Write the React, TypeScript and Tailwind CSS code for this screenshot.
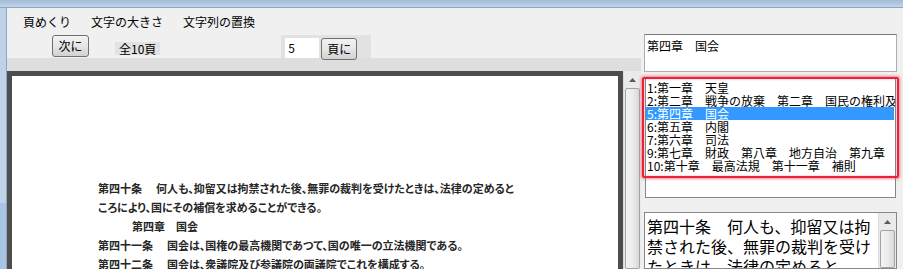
import React from "react";

function VScroll({ className }: { className: string }) {
  return (
    <div className={"flex flex-col bg-[#eaeaea] border-l border-[#dcdcdc] " + className}>
      <div className="h-[17px] shrink-0 flex items-center justify-center">
        <svg width="7" height="4" viewBox="0 0 7 4">
          <path d="M0 4 L3.5 0 L7 4 Z" fill="#5a5a5a" />
        </svg>
      </div>
      <div className="flex-1 mx-[1px] rounded-[2px] border border-[#a3a3a3] bg-gradient-to-r from-[#f4f4f4] via-[#ececec] to-[#d9d9d9]" />
    </div>
  );
}

function WinButton({ label, className }: { label: string; className: string }) {
  return (
    <div
      className={
        "flex items-center justify-center rounded-[3px] border border-[#707070] bg-gradient-to-b from-[#f3f3f3] via-[#e6e6e6] to-[#d2d2d2] text-[12px] " +
        className
      }
    >
      {label}
    </div>
  );
}

const listItems = [
  "1:第一章　天皇",
  "2:第二章　戦争の放棄　第二章　国民の権利及び義務",
  "5:第四章　国会",
  "6:第五章　内閣",
  "7:第六章　司法",
  "9:第七章　財政　第八章　地方自治　第九章　改正",
  "10:第十章　最高法規　第十一章　補則",
];

export default function App() {
  return (
    <div className="w-[903px] h-[269px] overflow-hidden flex flex-col bg-[#f0f0f0] font-['Noto_Sans_CJK_JP',sans-serif] text-[12px] text-black leading-none">
      <div className="h-[8px] shrink-0 bg-gradient-to-b from-[#a2bbd6] to-[#c2d5ea] border-b border-[#8ea6c1]" />
      <div className="flex flex-1 min-h-0">
        <div className="w-[7px] shrink-0 flex flex-col border-r border-[#8ea6c1]">
          <div className="flex-1 bg-[#bfd2e8]" />
          <div className="h-[66px] bg-[#a9c3e2]" />
        </div>
        {/* left column */}
        <div className="w-[634px] shrink-0 flex flex-col">
          <div className="h-[27px] shrink-0 flex items-center pl-[16px] gap-[20px] text-[12px]">
            <span>頁めくり</span>
            <span>文字の大きさ</span>
            <span>文字列の置換</span>
          </div>
          <div className="h-[23px] shrink-0 flex items-start">
            <WinButton label="次に" className="ml-[45px] w-[37px] h-[22px]" />
            <div className="ml-[26px] mt-[7px] h-[13px] px-[4px] bg-[#e2e2e2] flex items-center">全10頁</div>
            <div className="ml-[121px] h-[23px] w-[90px] bg-[#e2e2e2] flex items-start pl-[4px] pt-[3px] gap-[2px]">
              <div className="w-[34px] h-[20px] bg-white flex items-center pl-[3px]">5</div>
              <WinButton label="頁に" className="w-[36px] h-[22px] relative z-10" />
            </div>
          </div>
          <div className="h-[13px] shrink-0 bg-[#dedede]" />
          <div className="flex-1 min-h-0 flex">
            <div className="w-[616px] shrink-0 bg-[#4d4d4d] pt-[5px] px-[5px] flex">
              <div className="flex-1 bg-white pt-[103px] pl-[86px] text-[11px] text-[#262626] font-bold [font-feature-settings:'palt']">
                <div className="h-[19px] flex items-center whitespace-nowrap">
                  <span>第四十条</span>
                  <span className="ml-[14px]">何人も、抑留又は拘禁された後、無罪の裁判を受けたときは、法律の定めると</span>
                </div>
                <div className="h-[19px] flex items-center whitespace-nowrap">ころにより、国にその補償を求めることができる。</div>
                <div className="h-[19px] flex items-center whitespace-nowrap pl-[34px]">
                  <span>第四章</span>
                  <span className="ml-[11px]">国会</span>
                </div>
                <div className="h-[19px] flex items-center whitespace-nowrap">
                  <span>第四十一条</span>
                  <span className="ml-[14px]">国会は、国権の最高機関であつて、国の唯一の立法機関である。</span>
                </div>
                <div className="h-[19px] flex items-center whitespace-nowrap">
                  <span>第四十二条</span>
                  <span className="ml-[14px]">国会は、衆議院及び参議院の両議院でこれを構成する。</span>
                </div>
              </div>
            </div>
            <VScroll className="w-[18px] shrink-0" />
          </div>
        </div>
        {/* right column */}
        <div className="flex-1 flex flex-col pt-[26px] pl-[3px]">
          <div className="w-[253px] h-[38px] shrink-0 bg-white border border-[#abadb3] border-t-[#7a7a7a] pl-[2px] pt-[5px] text-[12px]">
            第四章　国会
          </div>
          <div className="relative ml-[1px] mt-[6px] w-[251px] h-[120px] shrink-0 bg-white border border-[#828790] pt-[2px] overflow-visible">
            {listItems.map((t, i) => (
              <div
                key={i}
                className={
                  i === 2
                    ? "h-[13px] flex items-center pl-[1px] whitespace-nowrap overflow-hidden bg-[#3399ff] text-white mr-[1px]"
                    : "h-[13px] flex items-center pl-[1px] whitespace-nowrap overflow-hidden"
                }
              >
                {t}
              </div>
            ))}
            <div className="absolute left-[-4px] top-[-2px] w-[257px] h-[101px] border-[2px] border-[#e8213c] rounded-[2px] shadow-[0_0_3px_1px_rgba(240,60,80,0.6),inset_0_0_2px_rgba(240,60,80,0.5)] pointer-events-none" />
          </div>
          <div className="mt-[14px] w-[253px] flex-1 min-h-0 shrink-0 bg-white border border-[#828790] flex overflow-hidden">
            <div className="flex-1 pl-[2px] pt-[3px] text-[16px] leading-[20px]">
              <div className="whitespace-nowrap">第四十条　何人も、抑留又は拘</div>
              <div className="whitespace-nowrap">禁された後、無罪の裁判を受け</div>
              <div className="whitespace-nowrap">たときは、法律の定めると</div>
            </div>
            <VScroll className="w-[18px] shrink-0" />
          </div>
        </div>
      </div>
    </div>
  );
}
